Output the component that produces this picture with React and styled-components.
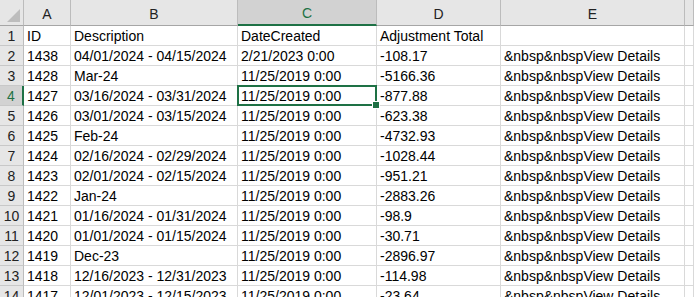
import styled, { createGlobalStyle } from 'styled-components'

const GlobalStyle = createGlobalStyle`
    html, body {
        margin: 0;
        padding: 0;
        background: #ffffff;
        overflow: hidden;
    }
    body {
        font-family: "Liberation Sans", Arial, sans-serif;
    }
`

const columns = ['A', 'B', 'C', 'D', 'E', '']

const rows = [
    ['ID', 'Description', 'DateCreated', 'Adjustment Total', ''],
    ['1438', '04/01/2024 - 04/15/2024', '2/21/2023 0:00', '-108.17', '&nbsp&nbspView Details'],
    ['1428', 'Mar-24', '11/25/2019 0:00', '-5166.36', '&nbsp&nbspView Details'],
    ['1427', '03/16/2024 - 03/31/2024', '11/25/2019 0:00', '-877.88', '&nbsp&nbspView Details'],
    ['1426', '03/01/2024 - 03/15/2024', '11/25/2019 0:00', '-623.38', '&nbsp&nbspView Details'],
    ['1425', 'Feb-24', '11/25/2019 0:00', '-4732.93', '&nbsp&nbspView Details'],
    ['1424', '02/16/2024 - 02/29/2024', '11/25/2019 0:00', '-1028.44', '&nbsp&nbspView Details'],
    ['1423', '02/01/2024 - 02/15/2024', '11/25/2019 0:00', '-951.21', '&nbsp&nbspView Details'],
    ['1422', 'Jan-24', '11/25/2019 0:00', '-2883.26', '&nbsp&nbspView Details'],
    ['1421', '01/16/2024 - 01/31/2024', '11/25/2019 0:00', '-98.9', '&nbsp&nbspView Details'],
    ['1420', '01/01/2024 - 01/15/2024', '11/25/2019 0:00', '-30.71', '&nbsp&nbspView Details'],
    ['1419', 'Dec-23', '11/25/2019 0:00', '-2896.97', '&nbsp&nbspView Details'],
    ['1418', '12/16/2023 - 12/31/2023', '11/25/2019 0:00', '-114.98', '&nbsp&nbspView Details'],
    ['1417', '12/01/2023 - 12/15/2023', '11/25/2019 0:00', '-23.64', '&nbsp&nbspView Details'],
]

// active cell is C4
const activeRow = 3
const activeCol = 2

export default function App(){
    return (
        <>
            <GlobalStyle />
            <Sheet>
                <Corner><CornerTriangle /></Corner>
                {columns.map((c, i) => (
                    <ColHeader key={'h' + i} $selected={i === activeCol}>{c}</ColHeader>
                ))}
                {rows.map((row, r) => (
                    <Row key={r}>
                        <RowHeader $selected={r === activeRow}>{r + 1}</RowHeader>
                        {row.map((value, c) => (
                            <Cell key={c} $active={r === activeRow && c === activeCol}>
                                {value}
                            </Cell>
                        ))}
                        <Cell />
                    </Row>
                ))}
            </Sheet>
        </>
    )
}

const green = '#1e7145'

const Sheet = styled.div`
    display: grid;
    grid-template-columns: 24px 47px 167px 139px 124px 184px 1fr;
    grid-template-rows: 26px;
    grid-auto-rows: 20px;
    width: 694px;
    height: 297px;
    overflow: hidden;
    font-size: 14px;
    color: #000;
`

const Row = styled.div`
    display: contents;
`

const Corner = styled.div`
    position: relative;
    background: #e6e6e6;
    border-right: 1px solid #bcbcbc;
    border-bottom: 1px solid #a6a6a6;
    box-sizing: border-box;
`

const CornerTriangle = styled.div`
    position: absolute;
    right: 3px;
    bottom: 3px;
    width: 0;
    height: 0;
    border-left: 13px solid transparent;
    border-bottom: 13px solid #bdbdbd;
`

const ColHeader = styled.div`
    display: flex;
    align-items: center;
    justify-content: center;
    box-sizing: border-box;
    padding-top: 2px;
    font-size: 14px;
    background: ${p => p.$selected ? '#d2d2d2' : '#e6e6e6'};
    color: ${p => p.$selected ? green : '#222'};
    border-right: 1px solid #bcbcbc;
    border-bottom: ${p => p.$selected ? `2px solid ${green}` : '1px solid #a6a6a6'};
`

const RowHeader = styled.div`
    display: flex;
    align-items: center;
    justify-content: center;
    box-sizing: border-box;
    font-size: 14px;
    background: ${p => p.$selected ? '#d2d2d2' : '#e6e6e6'};
    color: ${p => p.$selected ? green : '#222'};
    border-right: ${p => p.$selected ? `2px solid ${green}` : '1px solid #bcbcbc'};
    border-bottom: 1px solid #c8c8c8;
`

const Cell = styled.div`
    position: relative;
    box-sizing: border-box;
    padding: 1px 3px 0;
    line-height: 19px;
    white-space: nowrap;
    overflow: visible;
    border-right: 1px solid #d9d9d9;
    border-bottom: 1px solid #d9d9d9;

    ${p => p.$active && `
        z-index: 2;
        &::before {
            content: '';
            position: absolute;
            left: -1px;
            top: -1px;
            right: -1px;
            bottom: -1px;
            border: 2px solid ${green};
        }
        &::after {
            content: '';
            position: absolute;
            right: -4px;
            bottom: -4px;
            width: 6px;
            height: 6px;
            background: ${green};
            border: 1px solid #fff;
        }
    `}
`
